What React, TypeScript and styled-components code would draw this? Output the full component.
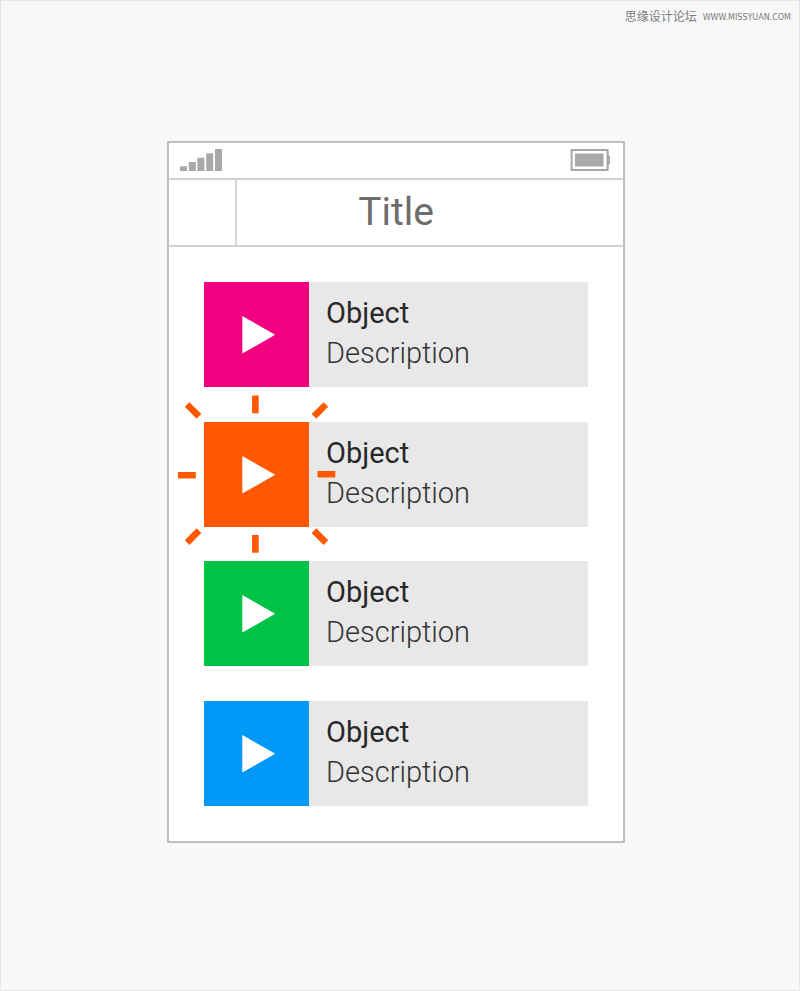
import React from "react";
import styled, { createGlobalStyle } from "styled-components";

const GlobalStyle = createGlobalStyle`
  *, *::before, *::after { box-sizing: border-box; }
  body { margin: 0; background: #f8f8f8; font-family: Roboto, sans-serif; }
`;

const Page = styled.div`
  display: flex;
  flex-direction: column;
  min-height: 100vh;
  border: 1px solid #e6e6e6;
  background: #f8f8f8;
`;

const Credit = styled.header`
  display: flex;
  justify-content: flex-end;
  align-items: center;
  gap: 6px;
  height: 30px;
  padding-right: 8px;
  color: #7c7c7c;
  font: 12px/18px "Noto Sans CJK SC", sans-serif;
`;

const CreditLink = styled.a`
  padding-top: 3px;
  color: inherit;
  text-decoration: none;
  font: 8px/12px "DejaVu Sans", sans-serif;
`;

const Stage = styled.main`
  display: flex;
  justify-content: center;
  padding: 110px 8px 120px 0;
`;

const Phone = styled.section`
  display: flex;
  flex-direction: column;
  width: 100%;
  max-width: 458px;
  min-height: 702px;
  border: 2px solid #bfbfbf;
  background: #fff;
`;

const StatusBar = styled.div`
  display: flex;
  justify-content: space-between;
  align-items: center;
  height: 37px;
  padding: 0 13px 2px 11px;
  border-bottom: 2px solid #d2d2d2;
`;

const TitleBar = styled.div`
  display: grid;
  grid-template-columns: 68px 1fr 68px;
  height: 67px;
  border-bottom: 2px solid #d2d2d2;
`;

const NavSlot = styled.div`
  border-right: 2px solid #d6d6d6;
`;

const Title = styled.h1`
  margin: 0;
  color: #6d6d6d;
  font-size: 39px;
  font-weight: 400;
  line-height: 64px;
  text-align: center;
`;

const List = styled.ul`
  display: flex;
  flex: 1;
  flex-direction: column;
  justify-content: space-between;
  gap: 34px;
  margin: 0;
  padding: 35px;
  list-style: none;
`;

const Row = styled.li`
  display: flex;
  height: 105px;
  background: #e8e8e8;
`;

const PlayButton = styled.button<{ $color: string }>`
  position: relative;
  display: grid;
  place-items: center;
  flex: none;
  width: 105px;
  padding: 0;
  border: 0;
  background: ${(p) => p.$color};
  cursor: pointer;
`;

const Rays = styled.svg`
  position: absolute;
  top: -27px;
  left: -27px;
  overflow: visible;
  pointer-events: none;
`;

const Copy = styled.div`
  padding: 11px 17px;
  font-size: 29px;
  line-height: 40px;
`;

const Name = styled.h2`
  margin: 0;
  color: #282828;
  font: inherit;
  font-weight: 400;
`;

const Description = styled.p`
  margin: 0;
  color: #333;
  font-weight: 300;
`;

const items = [
  { id: "pink", color: "#f2007f", active: false },
  { id: "orange", color: "#ff5800", active: true },
  { id: "green", color: "#00c244", active: false },
  { id: "blue", color: "#0099f8", active: false },
];

function Signal() {
  return (
    <svg width="42" height="22" viewBox="0 0 42 22" fill="#a8a8a8" role="img" aria-label="Signal">
      <rect x="0" y="17.3" width="7" height="4.7" />
      <rect x="8.8" y="13" width="7" height="9" />
      <rect x="17.4" y="8.7" width="7" height="13.3" />
      <rect x="26.2" y="4.3" width="7" height="17.7" />
      <rect x="35" y="0" width="7" height="22" />
    </svg>
  );
}

function Battery() {
  return (
    <svg width="40" height="22" viewBox="0 0 40 22" fill="#a8a8a8" role="img" aria-label="Battery">
      <rect x="1.6" y="1" width="36" height="20" fill="none" stroke="#a8a8a8" strokeWidth="2" />
      <rect x="5" y="4.5" width="28.5" height="13" />
      <rect x="37.6" y="6.5" width="2.4" height="9" />
    </svg>
  );
}

function PlayIcon() {
  return (
    <svg width="105" height="105" viewBox="0 0 105 105" fill="#fff" aria-hidden="true">
      <path d="M38.3 34 71.2 52.8 38.3 71.6Z" />
    </svg>
  );
}

function Highlight() {
  return (
    <Rays width="159" height="159" viewBox="0 0 159 159" stroke="#ff5800" strokeWidth="6.6" aria-hidden="true">
      <path d="M78.4 0.5V18.2M78.4 140V157.8M1 80.2H18.8M140.5 79.2H158.3M10.1 9.5 22 21.4M148.9 9.5 137 21.4M10.1 147.6 22 135.7M148.9 147.6 137 135.7" />
    </Rays>
  );
}

export default function App() {
  return (
    <>
      <GlobalStyle />
      <Page>
        <Credit>
          <span>思缘设计论坛</span>
          <CreditLink href="#">WWW.MISSYUAN.COM</CreditLink>
        </Credit>
        <Stage>
          <Phone>
            <StatusBar>
              <Signal />
              <Battery />
            </StatusBar>
            <TitleBar>
              <NavSlot />
              <Title>Title</Title>
            </TitleBar>
            <List>
              {items.map((item) => (
                <Row key={item.id}>
                  <PlayButton type="button" $color={item.color} aria-label="Play Object">
                    <PlayIcon />
                    {item.active && <Highlight />}
                  </PlayButton>
                  <Copy>
                    <Name>Object</Name>
                    <Description>Description</Description>
                  </Copy>
                </Row>
              ))}
            </List>
          </Phone>
        </Stage>
      </Page>
    </>
  );
}
